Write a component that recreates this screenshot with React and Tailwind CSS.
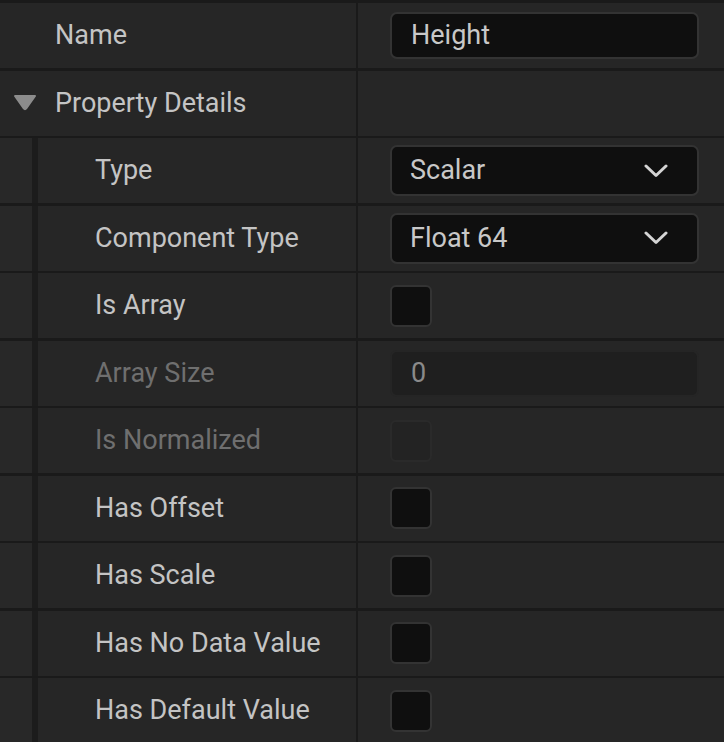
import React from "react";

const Chevron = () => (
  <svg width="24" height="14" viewBox="0 0 24 14" fill="none">
    <path d="M2 2 L12 11.5 L22 2" stroke="#d4d4d4" strokeWidth="3" strokeLinecap="round" strokeLinejoin="round" />
  </svg>
);

const TextBox = ({ value, disabled }) => (
  <div
    className={
      "flex h-[47px] w-[309px] items-center rounded-[7px] border-2 px-[19px] " +
      (disabled ? "border-[#252525] bg-[#1f1f1f] text-[#8a8a8a]" : "border-[#333333] bg-[#0f0f0f] text-[#c8c8c8]")
    }
  >
    {value}
  </div>
);

const Select = ({ value }) => (
  <div className="flex h-[51px] w-[309px] items-center justify-between rounded-[7px] border-2 border-[#333333] bg-[#0f0f0f] pl-[18px] pr-[29px] text-[#c8c8c8]">
    <span>{value}</span>
    <Chevron />
  </div>
);

const Checkbox = ({ disabled }) => (
  <div
    className={
      "h-[42px] w-[42px] rounded-[6px] border-2 " +
      (disabled ? "border-[#2a2a2a] bg-[#232323]" : "border-[#333333] bg-[#0f0f0f]")
    }
  />
);

const Row = ({ label, indent, disabled, toggle, children }) => (
  <div className="flex h-[65px] shrink-0">
    {indent ? (
      <div className="flex w-[356px] shrink-0">
        <div className="w-[32px] bg-[#282828]" />
        <div className="w-[6px] bg-[#1c1c1c]" />
        <div className={"flex flex-1 items-center bg-[#262626] pl-[57px] " + (disabled ? "text-[#6f6f6f]" : "text-[#c4c4c4]")}>
          {label}
        </div>
      </div>
    ) : (
      <div className="flex w-[356px] shrink-0 items-center bg-[#262626] text-[#c4c4c4]">
        <div className="flex w-[55px] justify-center pr-[6px]">
          {toggle && (
            <svg width="26" height="20" viewBox="0 0 26 20">
              <path d="M3 3 L23 3 L14.2 15.5 Q13 17 11.8 15.5 Z" fill="#8c8c8c" stroke="#8c8c8c" strokeWidth="2" strokeLinejoin="round" />
            </svg>
          )}
        </div>
        {label}
      </div>
    )}
    <div className="ml-[2px] flex flex-1 items-center bg-[#262626] pl-[32px]">{children}</div>
  </div>
);

export default function App() {
  return (
    <div
      className="flex h-[742px] w-[724px] flex-col gap-[2.5px] overflow-hidden bg-[#1a1a1a] pt-[3px] text-[27px]"
      style={{ fontFamily: "Roboto, 'Noto Sans', sans-serif" }}
    >
      <Row label="Name">
        <TextBox value="Height" />
      </Row>
      <Row label="Property Details" toggle />
      <Row label="Type" indent>
        <Select value="Scalar" />
      </Row>
      <Row label="Component Type" indent>
        <Select value="Float 64" />
      </Row>
      <Row label="Is Array" indent>
        <Checkbox />
      </Row>
      <Row label="Array Size" indent disabled>
        <TextBox value="0" disabled />
      </Row>
      <Row label="Is Normalized" indent disabled>
        <Checkbox disabled />
      </Row>
      <Row label="Has Offset" indent>
        <Checkbox />
      </Row>
      <Row label="Has Scale" indent>
        <Checkbox />
      </Row>
      <Row label="Has No Data Value" indent>
        <Checkbox />
      </Row>
      <Row label="Has Default Value" indent>
        <Checkbox />
      </Row>
    </div>
  );
}
